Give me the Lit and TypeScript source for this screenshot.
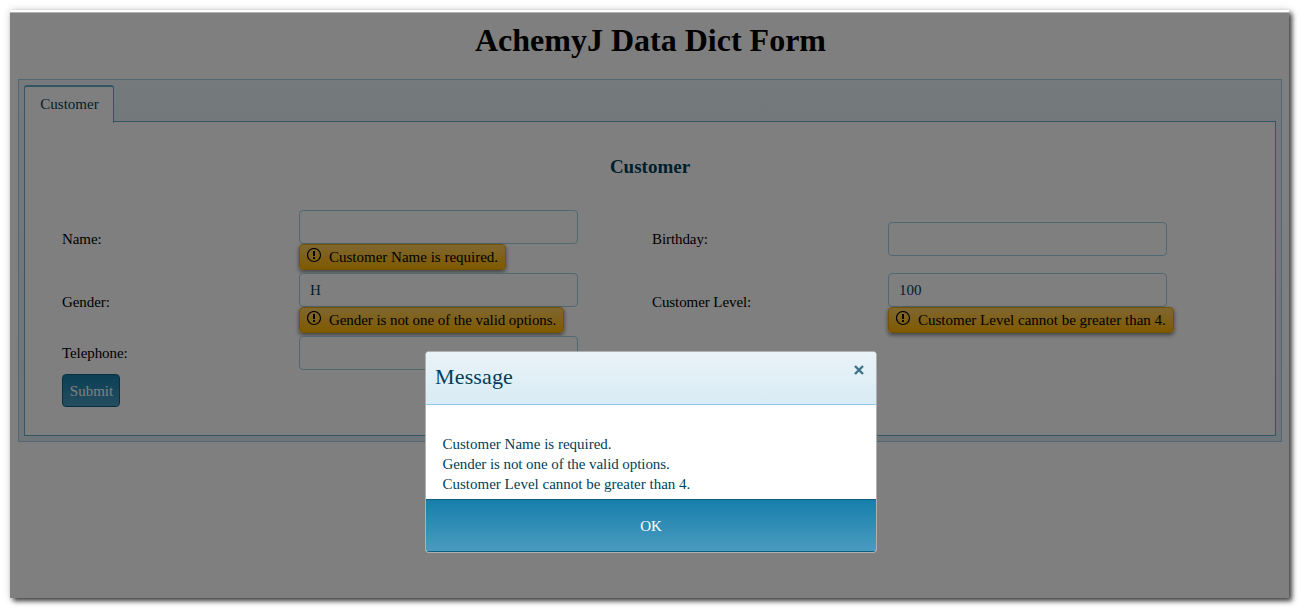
import { LitElement, html, css, svg } from "lit";
import { customElement, property } from "lit/decorators.js";

@customElement("form-field")
class FormField extends LitElement {
  @property() label = "";
  @property() value = "";
  @property() error = "";

  static styles = css`
    :host { display: contents; }
    .label { align-self: center; color: #000; white-space: nowrap; line-height: 20px; padding-bottom: 1px; letter-spacing: -0.08px; }
    .control { align-self: center; }
    .input {
      box-sizing: border-box; width: 279px; height: 34px; padding: 0 11px 2px 10px;
      border: 1px solid #a3d0e4; border-radius: 4px; background: #fff;
      color: #003f59; line-height: 32px;
    }
    .error {
      box-sizing: border-box; display: flex; width: max-content; height: 26px; margin-bottom: -2px;
      padding: 2px 7px 0 7px; gap: 7px; border: 1px solid #e8a400; border-radius: 4px;
      background: linear-gradient(#ffce60, #ffb400); color: #000;
      line-height: 20px; white-space: nowrap; box-shadow: 0 2px 4px rgba(0, 0, 0, 0.5);
    }
    :host([tight]) .error { letter-spacing: -0.07px; }
    .icon { width: 15px; height: 15px; margin-top: 1px; }
  `;

  render() {
    return html`
      <div class="label">${this.label}:</div>
      <div class="control">
        <div class="input">${this.value}</div>
        ${this.error
          ? html`<div class="error">
              <svg class="icon" viewBox="0 0 15 15">
                ${svg`<circle cx="7" cy="7" r="6.5" fill="none" stroke="#000" stroke-width="1.2"/>
                <path d="M6 3h2v5h-2zM6 9h2v2h-2z" fill="#000"/>`}
              </svg><span>${this.error}</span>
            </div>`
          : ""}
      </div>
    `;
  }
}

@customElement("app-root")
class AppRoot extends LitElement {
  static styles = css`
    :host {
      display: block; box-sizing: border-box; height: 609px; padding: 10px 0 0 10px; background: #fff;
      overflow: hidden; font: 15px/20px "Liberation Serif", serif;
    }
    .stage {
      position: relative; box-sizing: border-box; width: 1279px; height: 588px; padding: 10px 7px 0 8px;
      background: #fff; box-shadow: 3px 3px 5px rgba(0, 0, 0, 0.75), 0 0 8px rgba(0, 0, 0, 0.15);
    }
    .title { margin: 0; height: 59px; padding-left: 1px; font-size: 32px; line-height: 41px; text-align: center; color: #000; }
    .tabstrip {
      box-sizing: border-box; height: 363px; padding: 5px; border: 1px solid #a3d0e4;
      background: linear-gradient(#edf5f9, #e8f2f7 20px, #dcecf4);
    }
    .tabs { display: flex; height: 36px; }
    .tab {
      position: relative; z-index: 1; box-sizing: border-box; width: 90px; height: 38px; padding: 7px 0 0 1px;
      border: 1px solid #67abc8; border-top-width: 2px; border-bottom: 0; border-radius: 3px 3px 0 0;
      background: #fff; color: #003f59; text-align: center;
    }
    .content {
      box-sizing: border-box; height: 315px; padding: 34px 37px 0; border: 1px solid #67abc8;
      background: #fff; color: #003f59;
    }
    .heading { margin: 0 0 32px; font-size: 19px; line-height: 22px; text-align: center; }
    .form { display: grid; grid-template-columns: 237px 353px 236px 286px; grid-template-rows: 58px 58px 34px; row-gap: 5px; }
    .submit {
      box-sizing: border-box; width: 58px; height: 33px; margin-top: 4px; padding-left: 1px; border: 1px solid #0d607f; border-radius: 4px;
      background: linear-gradient(#167fac, #4b9bc0); color: #fff; line-height: 32px; text-align: center;
    }
    .shade { position: absolute; inset: 2px 0 0; z-index: 2; background: rgba(0, 0, 0, 0.5); background-clip: padding-box; border-top: 1px solid #b4b4b4; }
    .modal {
      position: absolute; z-index: 3; left: 415px; top: 341px; box-sizing: border-box; width: 452px; height: 202px;
      display: flex; flex-direction: column; border: 1px solid #b0b0b0; border-radius: 4px; overflow: hidden;
      background: #fff; color: #003f59;
    }
    .bar {
      box-sizing: border-box; height: 53px; display: flex; justify-content: space-between; padding: 11px 12px 0 9px;
      border-bottom: 1px solid #8fc9e4; background: linear-gradient(#e9f3f8, #d9ebf4); font-size: 22px; line-height: 28px;
      letter-spacing: 0.15px;
    }
    .close { width: 10px; height: 10px; margin-top: 2px; }
    .body { flex: 1; padding: 29px 16px 0 16.5px; }
    .tight { letter-spacing: -0.07px; }
    .ok {
      box-sizing: border-box; height: 53px; border: solid #0d607f; border-width: 1px 0;
      background: linear-gradient(#167fac, #4b9bc0); color: #fff; line-height: 52px; text-align: center;
    }
  `;

  private errors = [
    "Customer Name is required.",
    "Gender is not one of the valid options.",
    "Customer Level cannot be greater than 4.",
  ];

  render() {
    const [name, gender, level] = this.errors;
    return html`
      <div class="stage">
        <h1 class="title">AchemyJ Data Dict Form</h1>
        <div class="tabstrip">
          <div class="tabs"><div class="tab">Customer</div></div>
          <div class="content">
            <h3 class="heading">Customer</h3>
            <div class="form">
              <form-field label="Name" .error=${name}></form-field>
              <form-field label="Birthday"></form-field>
              <form-field label="Gender" value="H" tight .error=${gender}></form-field>
              <form-field label="Customer Level" value="100" .error=${level}></form-field>
              <form-field label="Telephone"></form-field>
            </div>
            <div class="submit">Submit</div>
          </div>
        </div>
        <div class="shade"></div>
        <div class="modal">
          <div class="bar">
            <span>Message</span>
            <svg class="close" viewBox="0 0 10 10"><path d="M1 1l8 8M9 1l-8 8" stroke="#3f7189" stroke-width="2.4"/></svg>
          </div>
          <div class="body">
            ${this.errors.map((e) => html`<div class=${e === gender ? "tight" : ""}>${e}</div>`)}
          </div>
          <div class="ok">OK</div>
        </div>
      </div>
    `;
  }
}
